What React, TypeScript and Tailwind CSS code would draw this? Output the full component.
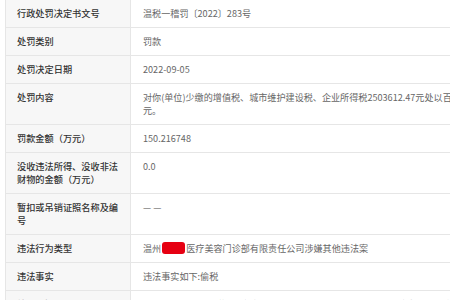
import React from "react";

const rows: { label: React.ReactNode; value: React.ReactNode }[] = [
  { label: "行政处罚决定书文号", value: "温税一稽罚〔2022〕283号" },
  { label: "处罚类别", value: "罚款" },
  { label: "处罚决定日期", value: "2022-09-05" },
  {
    label: "处罚内容",
    value: (
      <>
        <span className="block whitespace-nowrap">
          对你(单位)少缴的增值税、城市维护建设税、企业所得税2503612.47元处以百分之六十的罚款1502167.48
        </span>
        <span className="block">元。</span>
      </>
    ),
  },
  { label: "罚款金额（万元）", value: "150.216748" },
  { label: "没收违法所得、没收非法财物的金额（万元）", value: "0.0" },
  { label: "暂扣或吊销证照名称及编号", value: "— —" },
  {
    label: "违法行为类型",
    value: (
      <span className="whitespace-nowrap">
        温州
        <span className="inline-block w-[23px] h-[12px] align-[-2px] rounded-[3px] bg-[#e60012] mx-[1px]" />
        医疗美容门诊部有限责任公司涉嫌其他违法案
      </span>
    ),
  },
  { label: "违法事实", value: "违法事实如下:偷税" },
  {
    label: "处罚依据",
    value: (
      <>
        <span className="block whitespace-nowrap">
          《中华人民共和国增值税暂行条例》第一条“在中华人民共和国境内销售货物或者加工、修理修配劳务
        </span>
        <span className="block whitespace-nowrap">
          、销售服务、无形资产、不动产以及进口货物的单位和个人，为增值税的纳税人
        </span>
      </>
    ),
  },
];

export default function App() {
  return (
    <div
      className="w-[450px] h-[300px] overflow-hidden bg-white"
      style={{ fontFamily: '"Noto Sans CJK SC", "Noto Sans", sans-serif' }}
    >
      <div className="ml-[5px] w-[700px] border-l border-[#e6e6e6]">
        {rows.map((r, i) => (
          <div
            key={i}
            className={`grid grid-cols-[125px_1fr] ${i === 0 ? "" : "border-t"} border-[#e6e6e6]`}
          >
            <div className="bg-[#f7f7f7] border-r border-[#e6e6e6] pl-[11px] pr-[3px] pt-[7px] pb-[7px] text-[9.2px] leading-[13px] text-[#333] font-medium">
              {r.label}
            </div>
            <div className="pl-[12px] pt-[7px] pb-[7px] text-[9.1px] leading-[13px] text-[#666]">
              {r.value}
            </div>
          </div>
        ))}
      </div>
    </div>
  );
}
